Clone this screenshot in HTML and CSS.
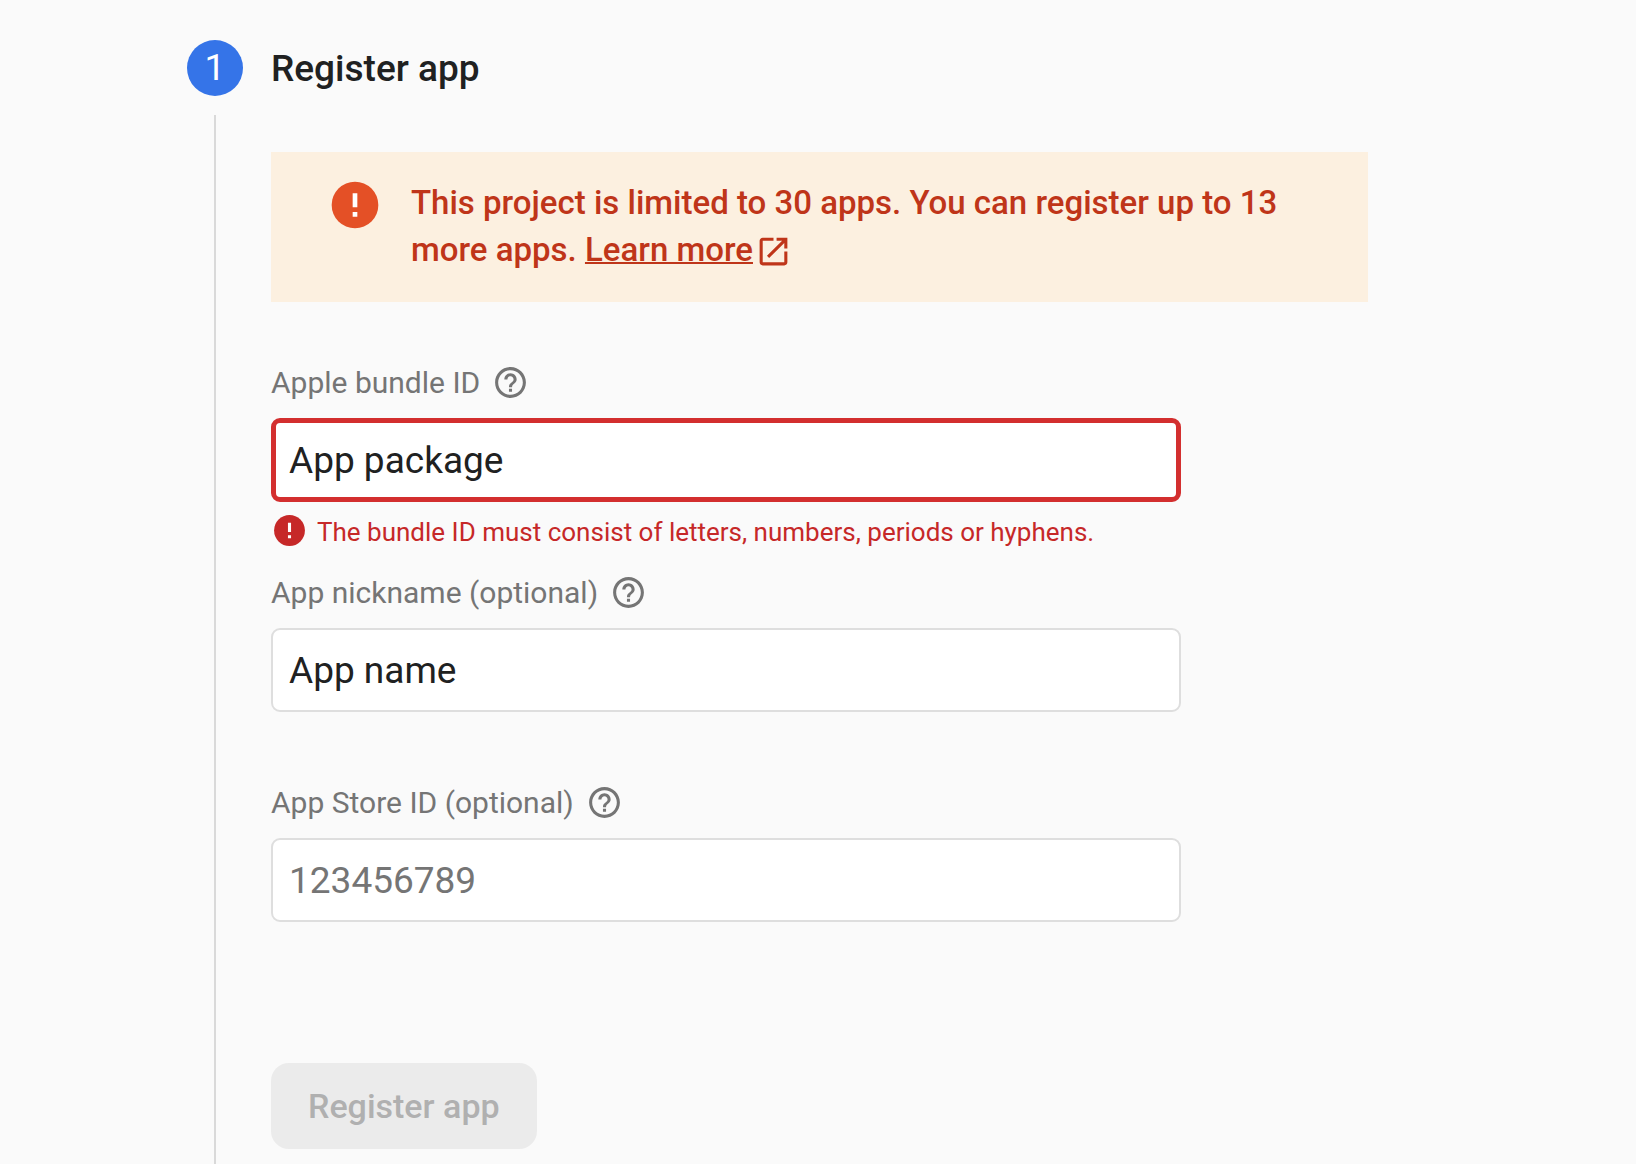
FILE: index.html
```html
<!DOCTYPE html>
<html lang="en">
<head>
<meta charset="utf-8">
<meta name="viewport" content="width=device-width, initial-scale=1">
<title>Register app</title>
<link rel="stylesheet" href="styles.css">
</head>
<body>
<svg class="sprite" aria-hidden="true">
  <symbol id="icon-help" viewBox="0 0 24 24"><path d="M11 18h2v-2h-2v2zm1-16C6.480 2 2 6.480 2 12s4.480 10 10 10 10-4.480 10-10S17.520 2 12 2zm0 18c-4.410 0-8-3.590-8-8s3.590-8 8-8 8 3.590 8 8-3.590 8-8 8zm0-14c-2.210 0-4 1.790-4 4h2c0-1.100.9-2 2-2s2 .9 2 2c0 2-3 1.750-3 5h2c0-2.250 3-2.500 3-5 0-2.210-1.790-4-4-4z"/></symbol>
  <symbol id="icon-error" viewBox="0 0 24 24"><circle cx="12" cy="12" r="10"/><path class="mark" d="M11 7h2v6h-2zM11 15h2v2h-2z"/></symbol>
  <symbol id="icon-open" viewBox="0 0 24 24"><path d="M19 19H5V5h7V3H5c-1.110 0-2 .9-2 2v14c0 1.100.89 2 2 2h14c1.100 0 2-.9 2-2v-7h-2v7zM14 3v2h3.590l-9.830 9.830 1.410 1.410L19 6.410V10h2V3h-7z"/></symbol>
</svg>
<main class="step">
  <span class="step-number">1</span>
  <h1 class="step-title">Register app</h1>
  <div class="step-rail"></div>
  <form class="step-body">
    <div class="banner" role="status">
      <svg class="banner-icon"><use href="#icon-error"/></svg>
      <p class="banner-text">This project is limited to 30 apps. You can register up to 13 more apps. <a class="banner-link" href="#learn-more">Learn more</a><svg class="banner-link-icon" aria-hidden="true"><use href="#icon-open"/></svg></p>
    </div>
    <div class="field">
      <div class="field-head">
        <label for="bundle-id">Apple bundle ID</label>
        <button class="help" type="button" aria-label="About the bundle ID"><svg class="icon"><use href="#icon-help"/></svg></button>
      </div>
      <input class="field-input invalid" id="bundle-id" type="text" value="App package" aria-invalid="true" aria-describedby="bundle-error">
      <div class="field-note" id="bundle-error"><svg class="icon" aria-hidden="true"><use href="#icon-error"/></svg><span>The bundle ID must consist of letters, numbers, periods or hyphens.</span></div>
    </div>
    <div class="field">
      <div class="field-head">
        <label for="nickname">App nickname (optional)</label>
        <button class="help" type="button" aria-label="About the nickname"><svg class="icon"><use href="#icon-help"/></svg></button>
      </div>
      <input class="field-input" id="nickname" type="text" value="App name">
      <div class="field-note"></div>
    </div>
    <div class="field">
      <div class="field-head">
        <label for="store-id">App Store ID (optional)</label>
        <button class="help" type="button" aria-label="About the App Store ID"><svg class="icon"><use href="#icon-help"/></svg></button>
      </div>
      <input class="field-input" id="store-id" type="text" placeholder="123456789">
      <div class="field-note"></div>
    </div>
    <button class="submit" type="submit" disabled>Register app</button>
  </form>
</main>
</body>
</html>
```
FILE: styles.css
```css
* { box-sizing: border-box; }

body {
  margin: 0;
  background: #fafafa;
  color: #202121;
  font-family: Roboto, "Liberation Sans", sans-serif;
}

.sprite { position: absolute; width: 0; height: 0; }

.step {
  display: grid;
  grid-template-columns: 56px minmax(0, 1097px);
  grid-template-rows: auto 1fr;
  column-gap: 28px;
  min-height: 100vh;
  padding: 40px 28px 0 187px;
}

.step-number {
  display: grid;
  place-items: center;
  height: 56px;
  border-radius: 50%;
  background: #3574e8;
  color: #fff;
  font-size: 37px;
  line-height: 56px;
}

.step-title {
  margin: 0;
  font-size: 37px;
  font-weight: 500;
  line-height: 57px;
}

.step-rail {
  width: 2px;
  margin: 18px auto 0;
  background: #d9d9d9;
}

.step-body { padding: 55px 0 15px; }

.banner {
  display: flex;
  gap: 28px;
  margin-bottom: 62px;
  padding: 27px 56px 29px;
  background: #fcf0e0;
  color: #bf3519;
}

.banner-icon {
  flex: none;
  width: 56px;
  height: 56px;
  margin: -2px 0;
  fill: #e45026;
}

.mark { fill: #fff; }

.banner-text {
  margin: 0;
  font-size: 33px;
  font-weight: 500;
  line-height: 47px;
}

.banner-link { color: inherit; text-decoration-thickness: 2px; }

.banner-link-icon {
  width: 37px;
  height: 37px;
  margin-left: 2px;
  fill: currentColor;
  vertical-align: -9px;
}

.field { max-width: 910px; }

.field-head {
  display: flex;
  align-items: center;
  gap: 12px;
  margin-bottom: 17px;
  color: #757575;
  font-size: 30px;
  line-height: 37px;
}

.help {
  display: block;
  padding: 0;
  border: 0;
  background: none;
  color: inherit;
}

.icon {
  display: block;
  flex: none;
  width: 37px;
  height: 37px;
  fill: currentColor;
}

.field-input {
  display: block;
  width: 100%;
  height: 84px;
  padding: 0 16px;
  border: 2px solid #dedede;
  border-radius: 9px;
  background: #fff;
  color: #202121;
  font: inherit;
  font-size: 37px;
}

.field-input::placeholder { color: #757575; opacity: 1; }

.field-input.invalid {
  padding: 0 13px;
  border: 5px solid #d32f2f;
}

.field-note {
  display: flex;
  gap: 9px;
  min-height: 72px;
  padding-top: 10px;
  color: #c62828;
  font-size: 26px;
  line-height: 40px;
}

.submit {
  display: block;
  margin-top: 69px;
  padding: 0 37px;
  border: 0;
  border-radius: 18px;
  background: #ebebeb;
  color: #b0b0b0;
  font: inherit;
  font-size: 34px;
  font-weight: 500;
  line-height: 86px;
}
```
